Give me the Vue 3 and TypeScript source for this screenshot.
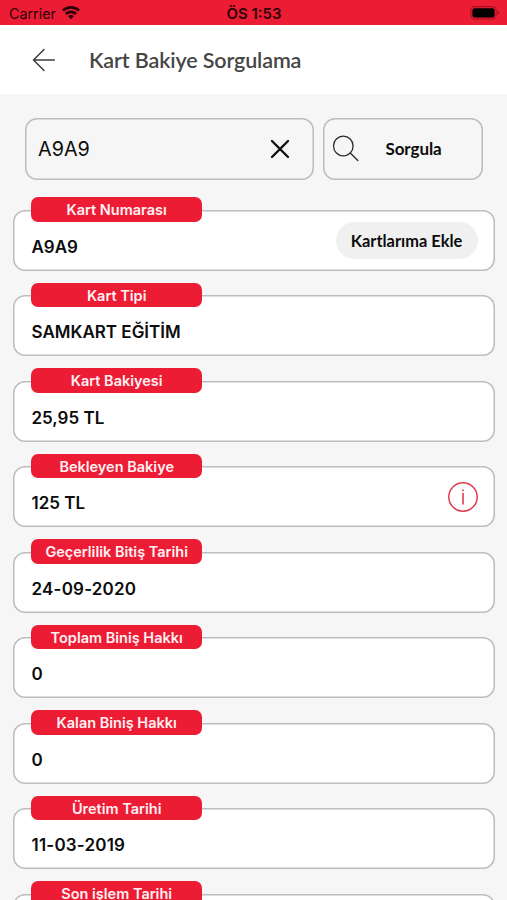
<script setup lang="ts">
interface Field {
  label: string
  value: string
  date?: boolean
  action?: 'add' | 'info'
}

const fields: Field[] = [
  { label: 'Kart Numarası', value: 'A9A9', action: 'add' },
  { label: 'Kart Tipi', value: 'SAMKART EĞİTİM' },
  { label: 'Kart Bakiyesi', value: '25,95 TL' },
  { label: 'Bekleyen Bakiye', value: '125 TL', action: 'info' },
  { label: 'Geçerlilik Bitiş Tarihi', value: '24-09-2020', date: true },
  { label: 'Toplam Biniş Hakkı', value: '0' },
  { label: 'Kalan Biniş Hakkı', value: '0' },
  { label: 'Üretim Tarihi', value: '11-03-2019', date: true },
  { label: 'Son işlem Tarihi', value: '' },
]
</script>

<template>
  <div class="screen">
    <div class="status">
      <div class="carrier">
        <span>Carrier</span>
        <svg width="18" height="14" viewBox="0 0 18 14" fill="none" stroke="#2b0307" stroke-width="2.7">
          <path d="M1 4.6C5.3.4 12.7.4 17 4.6" />
          <path d="M3.9 7.9C6.8 5.2 11.2 5.2 14.1 7.9" />
          <path d="M6 10.1C7.7 8.6 10.3 8.6 12 10.1L9 13.2Z" fill="#2b0307" stroke="none" />
        </svg>
      </div>
      <span class="time">ÖS 1:53</span>
      <svg class="battery" width="30" height="14" viewBox="0 0 30 14">
        <rect x=".8" y=".6" width="25.4" height="12.4" rx="3.8" fill="none" stroke="#a3131f" stroke-width="1.1" />
        <rect x="2.4" y="2.2" width="22.2" height="9.2" rx="2.2" fill="#000" />
        <path d="M27.7 4.8q1.6.6 1.6 2t-1.6 2z" fill="#a3131f" />
      </svg>
    </div>

    <header class="header">
      <svg width="24" height="24" viewBox="0 0 24 24" fill="none" stroke="#3c3c3c" stroke-width="1.5" stroke-linecap="round" stroke-linejoin="round">
        <path d="M12 1.5 1.5 12 12 22.5M1.5 12H22.3" />
      </svg>
      <h1>Kart Bakiye Sorgulama</h1>
    </header>

    <main>
      <div class="search">
        <div class="input">
          <span>A9A9</span>
          <svg width="20" height="20" viewBox="0 0 20 20" fill="none" stroke="#0b0b0b" stroke-width="2.3" stroke-linecap="round">
            <path d="m2 2 16 16M18 2 2 18" />
          </svg>
        </div>
        <div class="query">
          <svg width="27" height="27" viewBox="0 0 27 27" fill="none" stroke="#2a2a2a" stroke-width="1.3" stroke-linecap="round">
            <circle cx="11.3" cy="11" r="9.8" />
            <path d="m18.3 18 7.5 7.5" />
          </svg>
          <span>Sorgula</span>
        </div>
      </div>

      <section v-for="field in fields" :key="field.label" class="field">
        <div class="chip">{{ field.label }}</div>
        <div class="card">
          <span class="value" :class="{ date: field.date }">{{ field.value }}</span>
          <button v-if="field.action === 'add'" class="add">Kartlarıma Ekle</button>
          <svg v-if="field.action === 'info'" class="info" width="32" height="32" viewBox="0 0 32 32" fill="none" stroke="#e03a50">
            <circle cx="16" cy="16" r="14.2" stroke-width="1.5" />
            <path d="M16 12v11.5M16 8.4v1.8" stroke-width="1.6" />
          </svg>
        </div>
      </section>
    </main>
  </div>
</template>

<style>
body {
  background: #f6f6f6;
  overflow: hidden;
}
</style>

<style scoped>
.screen {
  width: 507px;
  height: 900px;
  overflow: hidden;
  background: #f6f6f6;
  font-family: Inter, 'Liberation Sans', sans-serif;
  color: #0c0c0c;
}

.status {
  display: grid;
  grid-template-columns: 1fr auto 1fr;
  align-items: center;
  box-sizing: border-box;
  height: 25px;
  padding: 2px 7px 0 9px;
  background: #ed1c35;
  color: #2b0307;
  font-size: 14.3px;
}

.carrier {
  display: flex;
  align-items: center;
  gap: 6px;
}

.carrier svg {
  margin-top: -2px;
}

.time {
  margin-right: 1px;
  font-size: 14.9px;
  font-weight: 600;
}

.battery {
  justify-self: end;
  margin-top: -1px;
}

.header {
  display: flex;
  align-items: center;
  box-sizing: border-box;
  height: 69px;
  padding: 0 32px;
  gap: 33px;
  background: #fff;
}

h1 {
  margin: 0;
  color: #464646;
  font: 600 21.5px/30px Lato, sans-serif;
  letter-spacing: -0.13px;
}

.search {
  display: flex;
  gap: 9px;
  padding: 24px 24px 17.9px 25px;
}

.input,
.query {
  display: flex;
  align-items: center;
  box-sizing: border-box;
  height: 61.5px;
  border-radius: 12px;
  box-shadow: inset 0 0 0 1.5px #bdbdbd;
}

.input {
  justify-content: space-between;
  width: 289px;
  padding: 0 24.5px 0 13px;
  font-size: 19.8px;
}

.query {
  width: 160px;
  padding-left: 9px;
  gap: 26.5px;
  font: 700 17px/24px Lato, sans-serif;
  letter-spacing: -0.1px;
}

.field {
  display: flex;
  flex-direction: column;
  height: 85.5px;
  padding: 0 12.5px;
}

.chip {
  z-index: 1;
  width: 171px;
  height: 24.4px;
  margin: 0 0 -12.2px 18.7px;
  border-radius: 7px;
  background: #ed1c35;
  color: #fff0f2;
  font-size: 14.5px;
  font-weight: 600;
  line-height: 25.6px;
  text-align: center;
  white-space: nowrap;
}

.card {
  display: flex;
  align-items: center;
  justify-content: space-between;
  box-sizing: border-box;
  height: 61px;
  padding: 0 17px 0 19px;
  border-radius: 12px;
  background: #fff;
  box-shadow: inset 0 0 0 1.5px #bdbdbd;
}

.value {
  padding-top: 13.4px;
  font-size: 17px;
  font-weight: 600;
  line-height: 24px;
}

.date {
  letter-spacing: 0.2px;
}

.add {
  width: 142px;
  height: 37px;
  padding: 0;
  border: 0;
  border-radius: 18.5px;
  background: #f0f0f0;
  color: #0c0c0c;
  font: 700 16.4px/25px Lato, sans-serif;
}

.info {
  margin-right: -1px;
}
</style>
